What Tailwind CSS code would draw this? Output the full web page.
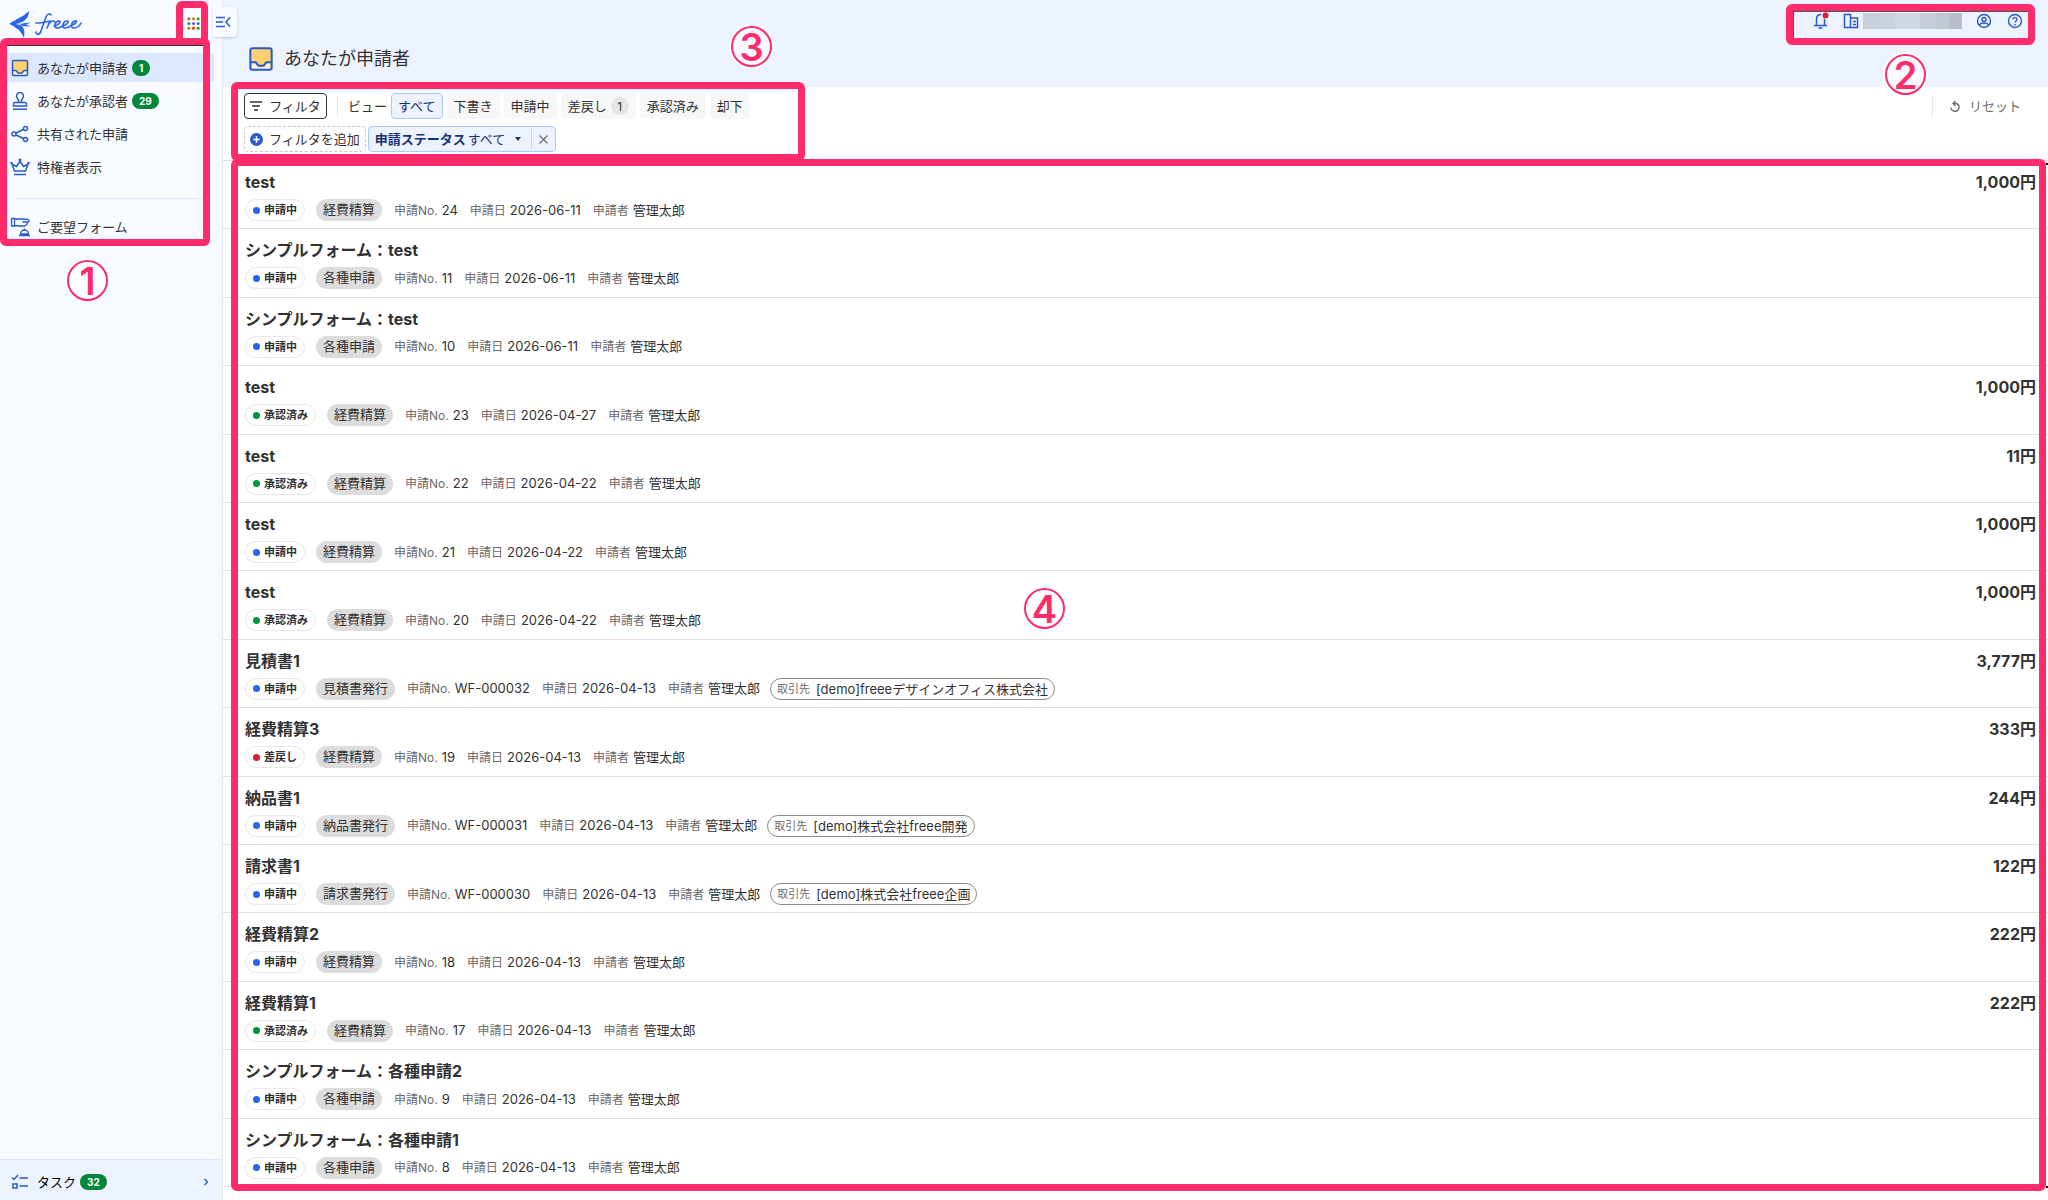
<!DOCTYPE html>
<html lang="ja">
<head>
    <meta charset="UTF-8">
    <meta name="viewport" content="width=device-width, initial-scale=1.0">
    <title>あなたが申請者</title>
    <script src="https://cdn.jsdelivr.net/npm/@tailwindcss/browser@4"></script>
</head>
<body class="relative h-screen flex overflow-hidden bg-white text-[#323232] font-['Inter','Noto_Sans_CJK_JP',sans-serif]">
    <!-- Sidebar -->
    <aside class="w-[223px] shrink-0 flex flex-col bg-[#f7faff] border-r border-[#dce8ff]">
        <div class="h-[53px] shrink-0 flex items-start justify-between pl-2 pr-[18px]">
            <a href="#" aria-label="freee">
                <svg class="mt-2 w-[76px] h-[32px]" viewBox="0 0 76 32" fill="none">
                    <path d="M1 16C5 13 8 12 11 10C15 8 18 6 21 3C21 8 18 12 14 14L8 16L14 18C16 20 17 25 16 30C14 26 12 22 8 20C6 18 4 17 1 16Z" fill="#2864f0"/>
                    <path d="M8 16L23 14.500L18 16.500L23 18.500L14 18Z" fill="#2864f0"/>
                    <path d="M8 16L16 15.300L12 16.600L15 17.500Z" fill="#f7faff"/>
                    <g stroke="#2864f0" stroke-width="1.600" stroke-linecap="round" stroke-linejoin="round">
                        <path d="M43 7C42 5 39 6 38 9L33 23C32 27 28 27 28 24"/>
                        <path d="M28 15C33 15 37 14 42 13L39 20M41 16C43 13 45 12 47 14"/>
                        <path d="M46 18C50 18 54 13 51 13C47 13 45 20 49 20C53 20 54 18 55 18C59 17 62 13 59 13C55 13 53 20 57 20C61 20 62 18 64 17C68 16 70 12 67 13C63 14 62 20 66 20C70 20 72 17 73 15"/>
                    </g>
                </svg>
            </a>
            <button class="mt-3 size-[22px] grid place-items-center rounded-full bg-white" aria-label="アプリ一覧">
                <svg class="size-[13px]" viewBox="0 0 14 14">
                    <circle cx="2" cy="2" r="1.700" fill="#d9501e"/><circle cx="7" cy="2" r="1.700" fill="#b58a1b"/><circle cx="12" cy="2" r="1.700" fill="#4d9a2d"/>
                    <circle cx="2" cy="7" r="1.700" fill="#1692a0"/><circle cx="7" cy="7" r="1.700" fill="#8c46e6"/><circle cx="12" cy="7" r="1.700" fill="#2b8a8a"/>
                    <circle cx="2" cy="12" r="1.700" fill="#b58a1b"/><circle cx="7" cy="12" r="1.700" fill="#d9501e"/><circle cx="12" cy="12" r="1.700" fill="#4d9a2d"/>
                </svg>
            </button>
        </div>
        <nav class="flex flex-col gap-1 text-[13px] leading-5 text-[#323232]">
            <a href="#" class="flex items-center h-[29px] mr-2 pl-[11px] rounded-r bg-[#dce8ff]">
                <svg class="size-[18px] mr-2" viewBox="0 0 18 18"><rect x="1.500" y="1.500" width="15" height="15" rx="1.500" fill="#ffd071"/><path d="M2 12h3.500l1.500 2h4l1.500-2H16v4.500H2z" fill="#fff2d6"/><path d="M1.500 11.500H5l2 2.500h4l2-2.500h3.500" fill="none" stroke="#285ac8" stroke-width="1.500"/><rect x="1.500" y="1.500" width="15" height="15" rx="1.500" fill="none" stroke="#285ac8" stroke-width="1.500"/></svg>
                あなたが申請者
                <span class="ml-1 h-4 px-[7px] rounded-full bg-[#00873c] text-white text-[10px] leading-4 font-bold">1</span>
            </a>
            <a href="#" class="flex items-center h-[29px] mr-2 pl-[11px]">
                <svg class="size-[18px] mr-2" viewBox="0 0 18 18" fill="none" stroke="#285ac8" stroke-width="1.500"><path d="M7.500 10.500V8C6 6.500 5.500 5.500 5.500 4a3.500 3.500 0 0 1 7 0c0 1.500-.5 2.500-2 4v2.500M2.500 14v-2a1.500 1.500 0 0 1 1.500-1.500h10a1.500 1.500 0 0 1 1.500 1.500v2zM2 17.200h14"/></svg>
                あなたが承認者
                <span class="ml-1 h-4 px-[7px] rounded-full bg-[#00873c] text-white text-[10px] leading-4 font-bold">29</span>
            </a>
            <a href="#" class="flex items-center h-[29px] mr-2 pl-[11px]">
                <svg class="size-[18px] mr-2" viewBox="0 0 18 18" fill="none" stroke="#285ac8" stroke-width="1.500"><circle cx="3" cy="9" r="2"/><circle cx="14.500" cy="3.500" r="2"/><circle cx="14.500" cy="14.500" r="2"/><path d="M5 8l7.500-3.500M5 10l7.500 3.500"/></svg>
                共有された申請
            </a>
            <a href="#" class="flex items-center h-[29px] mr-2 pl-[11px]">
                <svg class="size-[18px] mr-2 overflow-visible" viewBox="0 0 18 18" fill="none" stroke="#285ac8" stroke-width="1.500"><path d="M3.500 13L1 6l4.500 2.500L9 3.500l3.500 5L17 6l-2.500 7zM3 16.500h12"/><circle cx="0.500" cy="5" r="1.200" fill="#285ac8" stroke="none"/><circle cx="17.500" cy="5" r="1.200" fill="#285ac8" stroke="none"/><circle cx="9" cy="2" r="1.500" fill="#285ac8" stroke="none"/></svg>
                特権者表示
            </a>
            <hr class="mt-[13px] ml-[15px] mr-5 border-[#dce8ff]">
            <a href="#" class="flex items-center h-[29px] mt-[9px] mr-2 pl-[11px]">
                <svg class="size-[18px] mr-2 overflow-visible" viewBox="0 0 18 18" fill="none" stroke="#285ac8" stroke-width="1.300" stroke-linejoin="round"><path d="M0.500 0.500h3v7.500H0.500zM3.500 1h6.500l7 .5c1.500.5 1.500 2 0 2.500h-5.500M3.500 7.500l5 .500h5c1.500 0 2-1 2.500-2l1-2M9.500 16a4 4 0 0 1 8 0zM8 17.500h11M13.500 12v-1.500"/></svg>
                ご要望フォーム
            </a>
        </nav>
        <a href="#" class="mt-auto h-[41px] shrink-0 flex items-center pl-[11px] pr-[14px] pt-[3px] border-t border-[#dce8ff] bg-[#edf2ff] text-[13px] leading-5 text-black">
            <svg class="size-[18px] mr-2" viewBox="0 0 18 18" fill="none" stroke="#285ac8" stroke-width="1.500"><path d="M1 4.500l2 2L7 2M8.500 5H17M8.500 13H17"/><rect x="2" y="11" width="4" height="4"/></svg>
            タスク
            <span class="ml-1 h-4 px-[7px] rounded-full bg-[#00873c] text-white text-[10px] leading-4 font-bold">32</span>
            <svg class="ml-auto w-1 h-2" viewBox="0 0 4 8" fill="none" stroke="#285ac8" stroke-width="1.300"><path d="M.5 1l3 3-3 3"/></svg>
        </a>
    </aside>

    <main class="flex-1 min-w-0 flex flex-col">
        <!-- Page header -->
        <header class="h-[87px] shrink-0 flex items-start justify-between bg-[#edf2ff]">
            <div class="flex items-center gap-[11px] pt-[43px] pl-[26px]">
                <svg class="size-6" viewBox="0 0 18 18"><rect x="1" y="1" width="16" height="16" rx="1.500" fill="#ffd071"/><path d="M2 12h3.500l1.500 2h4l1.500-2H16v4.500H2z" fill="#fff2d6"/><path d="M1 11.500h4l2 2.500h4l2-2.500h4" fill="none" stroke="#285ac8" stroke-width="1.500"/><rect x="1" y="1" width="16" height="16" rx="1.500" fill="none" stroke="#285ac8" stroke-width="1.500"/></svg>
                <h1 class="text-[18px] leading-8">あなたが申請者</h1>
            </div>
            <div class="flex items-center h-[42px] pr-[25px]">
                <button aria-label="通知"><svg class="size-4 overflow-visible" viewBox="0 0 16 16" fill="none" stroke="#285ac8" stroke-width="1.500"><path d="M9 1.500C5.500 1.500 4.500 4 4.500 6v6M12.500 6v6M2 12.500h13M6.500 15h4"/><circle cx="13.500" cy="2.500" r="3" fill="#dc1e32" stroke="none"/></svg></button>
                <button class="ml-[15px]" aria-label="事業所"><svg class="size-4" viewBox="0 0 16 16" fill="none" stroke="#285ac8" stroke-width="1.500"><path d="M7.500 14.500H1.500v-13H7.500v13h7V5h-7M10 8.500h3M10 11.500h3"/></svg></button>
                <span class="ml-1 flex w-[99px] h-4">
                    <span class="w-4 bg-[#c8ceda]"></span><span class="w-4 bg-[#cbd1dc]"></span><span class="flex-1 bg-[#d0d6e1]"></span><span class="w-4 bg-[#c8ced9]"></span><span class="w-[13px] bg-[#c2c8d3]"></span><span class="w-[13px] bg-[#b8bdc7]"></span>
                </span>
                <button class="ml-[14px]" aria-label="アカウント"><svg class="size-4" viewBox="0 0 16 16" fill="none" stroke="#285ac8" stroke-width="1.400"><circle cx="8" cy="8" r="6.500"/><circle cx="8" cy="6.500" r="2"/><path d="M3.500 12.500c.5-2 2-2.500 4.500-2.500s4 .5 4.500 2.500"/></svg></button>
                <button class="ml-[15px]" aria-label="ヘルプ"><svg class="size-4" viewBox="0 0 16 16" fill="none" stroke="#285ac8" stroke-width="1.400"><circle cx="8" cy="8" r="6.500"/><path d="M6 6.500C6 4 10 4 10 6.500 10 8 8 8 8 9.500M8 11v1.500"/></svg></button>
            </div>
        </header>

        <!-- Filters -->
        <section class="h-[74px] shrink-0 flex items-start justify-between pt-[6px] pl-[21px] pr-[27px] border-b border-[#e1dcdc] text-[13px] leading-5">
            <div class="flex flex-col gap-[7px]">
                <div class="flex items-center gap-1">
                    <button class="h-[26px] w-[83px] flex items-center justify-center gap-[7px] rounded border border-[#323232]"><svg class="w-3 h-[10px] shrink-0" viewBox="0 0 12 10" stroke="#323232" stroke-width="1.500"><path d="M0 1h12M2 5h8M4 9h4"/></svg>フィルタ</button>
                    <span class="ml-[6px] mr-[6px] w-px h-[22px] bg-[#e9e7e7]"></span>
                    <span>ビュー</span>
                    <button class="h-[26px] px-[6px] rounded border border-[#aac8ff] bg-[#edf2ff] text-[#143278]">すべて</button>
                    <button class="h-[26px] px-[7px] rounded bg-[#f7f7f7]">下書き</button>
                    <button class="h-[26px] px-[7px] rounded bg-[#f7f7f7]">申請中</button>
                    <button class="h-[26px] px-[7px] flex items-center gap-1 rounded bg-[#f7f7f7]">差戻し <span class="size-[18px] grid place-items-center rounded-full bg-[#e6e6e6] text-[12px]">1</span></button>
                    <button class="h-[26px] px-[7px] rounded bg-[#f7f7f7]">承認済み</button>
                    <button class="h-[26px] px-[7px] rounded bg-[#f7f7f7]">却下</button>
                </div>
                <div class="flex items-center gap-[2px]">
                    <button class="h-[26px] px-[5px] flex items-center gap-[6px] rounded border border-dashed border-[#c8c8c8]"><svg class="size-[13px]" viewBox="0 0 12 12"><circle cx="6" cy="6" r="6" fill="#285ac8"/><path d="M6 3v6M3 6h6" stroke="#fff" stroke-width="1.500"/></svg>フィルタを追加</button>
                    <div class="h-[26px] flex items-center rounded border border-[#aac8ff] bg-[#edf2ff] text-[#143278]">
                        <button class="flex items-center pl-[6px] pr-[10px]"><b class="mr-[2px]">申請ステータス</b>すべて<svg class="ml-[10px] w-[6px] h-1" viewBox="0 0 6 4"><path d="M0 0h6L3 4z" fill="#143278"/></svg></button>
                        <button class="h-5 w-6 grid place-items-center border-l border-[#d7d2d2]" aria-label="削除"><svg class="size-[9px]" viewBox="0 0 9 9" stroke="#6e6b6b" stroke-width="1.200"><path d="M.5.5l8 8M8.500.5l-8 8"/></svg></button>
                    </div>
                </div>
            </div>
            <button class="mt-[2px] h-[22px] flex items-center gap-2 pl-4 border-l border-[#e9e7e7] text-[#6e6b6b]"><svg class="size-3 overflow-visible" viewBox="0 0 12 12" fill="none" stroke="#6e6b6b" stroke-width="1.400"><path d="M4 3.500h3.500a4 4 0 1 1-5.500 4M6.500 1L4 3.500 6.500 6"/></svg>リセット</button>
        </section>

        <!-- Requests -->
        <ul id="requests" class="flex-1 min-h-0 flex flex-col pb-[13px]"></ul>
    </main>

    <!-- Sidebar toggle -->
    <button class="absolute left-[213px] top-[7px] w-6 h-[30px] pr-1 grid place-items-center rounded-r bg-[#f7faff] shadow-sm shadow-[#285ac8]/20" aria-label="メニューを閉じる">
        <svg class="w-[15px] h-3" viewBox="0 0 15 12" fill="none" stroke="#285ac8" stroke-width="1.500"><path d="M0 1.500h9M0 6h7M0 10.500h9M14 1.500L10 6l4 4.500"/></svg>
    </button>

    <!-- Callout frames and numbers -->
    <div class="absolute left-[176px] top-[1px] w-[32px] h-[44px] border-[7px] border-[#ff2b6a] rounded-md pointer-events-none"></div>
    <div class="absolute left-0 top-[38px] w-[210px] h-[208px] border-[7px] border-[#ff2b6a] rounded-md shadow-[inset_0_1px_0_#333] pointer-events-none"></div>
    <div class="absolute right-[13px] top-1 w-[249px] h-[41px] border-[7px] border-[#ff2b6a] rounded-md shadow-[inset_1px_1px_0_#555] pointer-events-none"></div>
    <div class="absolute left-[231px] top-[82px] w-[574px] h-[79px] border-[7px] border-[#ff2b6a] rounded-md pointer-events-none"></div>
    <div class="absolute left-[231px] right-[2px] top-[159px] bottom-[9px] border-[7px] border-[#ff2b6a] rounded-md pointer-events-none"></div>
    <div class="absolute right-0 top-[163px] w-[2px] h-[2px] bg-black"></div>
    <div class="absolute right-0 bottom-[12px] w-[2px] h-[2px] bg-black"></div>
    <div class="absolute left-[67px] top-[260px] size-[41px] grid place-items-center rounded-full border-2 border-[#ff2b6a] bg-white/60 ring-2 ring-white text-[#ff2b6a] text-[38px] leading-none font-semibold">1</div>
    <div class="absolute right-[122px] top-[54px] size-[41px] grid place-items-center rounded-full border-2 border-[#ff2b6a] bg-white/60 ring-2 ring-white text-[#ff2b6a] text-[38px] leading-none font-semibold">2</div>
    <div class="absolute left-[731px] top-[26px] size-[41px] grid place-items-center rounded-full border-2 border-[#ff2b6a] bg-white/60 ring-2 ring-white text-[#ff2b6a] text-[38px] leading-none font-semibold">3</div>
    <div class="absolute left-[1024px] top-[588px] size-[41px] grid place-items-center rounded-full border-2 border-[#ff2b6a] bg-white/60 ring-2 ring-white text-[#ff2b6a] text-[38px] leading-none font-semibold">4</div>

    <script>
        const requests = [
            ['test', '申請中', '経費精算', '24', '2026-06-11', '1,000円'],
            ['シンプルフォーム：test', '申請中', '各種申請', '11', '2026-06-11', ''],
            ['シンプルフォーム：test', '申請中', '各種申請', '10', '2026-06-11', ''],
            ['test', '承認済み', '経費精算', '23', '2026-04-27', '1,000円'],
            ['test', '承認済み', '経費精算', '22', '2026-04-22', '11円'],
            ['test', '申請中', '経費精算', '21', '2026-04-22', '1,000円'],
            ['test', '承認済み', '経費精算', '20', '2026-04-22', '1,000円'],
            ['見積書1', '申請中', '見積書発行', 'WF-000032', '2026-04-13', '3,777円', '[demo]freeeデザインオフィス株式会社'],
            ['経費精算3', '差戻し', '経費精算', '19', '2026-04-13', '333円'],
            ['納品書1', '申請中', '納品書発行', 'WF-000031', '2026-04-13', '244円', '[demo]株式会社freee開発'],
            ['請求書1', '申請中', '請求書発行', 'WF-000030', '2026-04-13', '122円', '[demo]株式会社freee企画'],
            ['経費精算2', '申請中', '経費精算', '18', '2026-04-13', '222円'],
            ['経費精算1', '承認済み', '経費精算', '17', '2026-04-13', '222円'],
            ['シンプルフォーム：各種申請2', '申請中', '各種申請', '9', '2026-04-13', ''],
            ['シンプルフォーム：各種申請1', '申請中', '各種申請', '8', '2026-04-13', ''],
        ];
        const dots = { '申請中': 'bg-[#2864f0]', '承認済み': 'bg-[#00963c]', '差戻し': 'bg-[#dc1e32]' };

        document.getElementById('requests').innerHTML = requests.map(([title, status, type, no, date, amount, partner]) => `
            <li class="flex-1 min-h-0 flex items-start justify-between pt-[9px] pl-[22px] pr-3 border-b border-[#e1dfdf]">
                <div>
                    <h2 class="text-[16px] leading-6 font-bold">${title}</h2>
                    <div class="mt-[5px] flex items-center h-[22px] text-[13px] leading-5">
                        <span class="h-[22px] px-[7px] flex items-center gap-1 rounded-full border border-[#e9e7e7] text-[11px] font-bold"><i class="size-[7px] rounded-full ${dots[status]}"></i>${status}</span>
                        <span class="ml-[11px] h-[22px] px-[7px] rounded-full bg-[#dcdcdc]">${type}</span>
                        <span class="ml-3 flex items-baseline gap-1"><span class="text-[12px] text-[#6e6b6b]">申請No.</span>${no}</span>
                        <span class="ml-3 flex items-baseline gap-1"><span class="text-[12px] text-[#6e6b6b]">申請日</span>${date}</span>
                        <span class="ml-3 flex items-baseline gap-1"><span class="text-[12px] text-[#6e6b6b]">申請者</span>管理太郎</span>
                        ${partner ? `<span class="ml-[10px] h-[22px] px-[6px] flex items-center gap-[6px] rounded-full border border-[#8c8989]"><span class="text-[11px] text-[#6e6b6b]">取引先</span>${partner}</span>` : ''}
                    </div>
                </div>
                <p class="text-[16px] leading-6 font-bold">${amount}</p>
            </li>`).join('');
    </script>
</body>
</html>
